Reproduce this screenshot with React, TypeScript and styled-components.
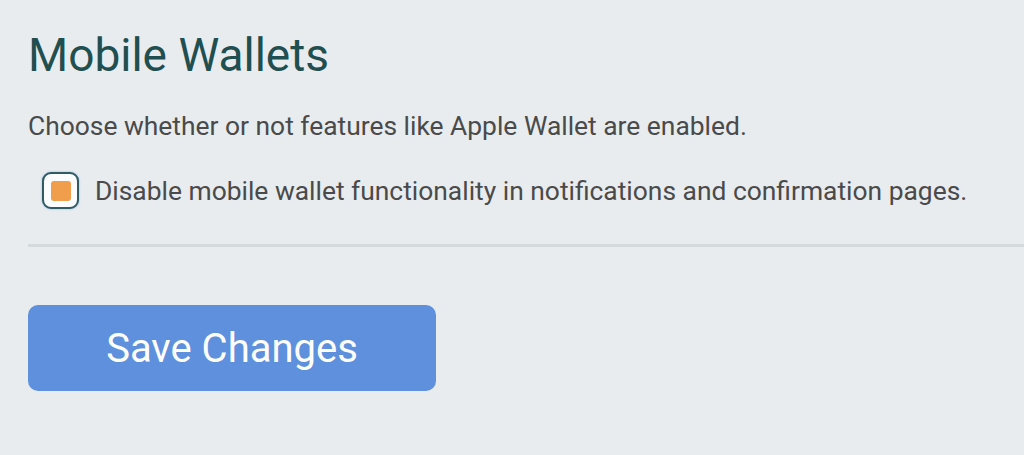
import styled, { createGlobalStyle } from "styled-components";

const GlobalStyle = createGlobalStyle`
  html, body {
    margin: 0;
    padding: 0;
    background: #e8ecef;
    font-family: Roboto, "Liberation Sans", sans-serif;
  }
`;

function App() {
  return (
    <>
      <GlobalStyle />
      <Page>
        <Title>Mobile Wallets</Title>
        <Description>
          Choose whether or not features like Apple Wallet are enabled.
        </Description>
        <Option>
          <Checkbox>
            <Mark />
          </Checkbox>
          <OptionLabel>
            Disable mobile wallet functionality in notifications and
            confirmation pages.
          </OptionLabel>
        </Option>
        <Divider />
        <SaveButton>Save Changes</SaveButton>
      </Page>
    </>
  );
}

export default App;

const Page = styled.div`
  height: 455px;
  box-sizing: border-box;
  padding: 27px 0 0 28px;
  display: flex;
  flex-direction: column;
  align-items: flex-start;
`;

const Title = styled.h1`
  margin: 0;
  font-size: 46px;
  font-weight: 400;
  line-height: 56px;
  color: #1f4f50;
`;

const Description = styled.p`
  margin: 27px 0 0;
  font-size: 26.4px;
  line-height: 32px;
  color: #4a4a4a;
`;

const Option = styled.label`
  margin-top: 30px;
  margin-left: 14px;
  display: flex;
  align-items: center;
  gap: 16px;
`;

const Checkbox = styled.span`
  width: 37px;
  height: 37px;
  flex-shrink: 0;
  box-sizing: border-box;
  border: 2px solid #2e5c60;
  border-radius: 9px;
  background: #fbfcfd;
  box-shadow: 0 0 2px rgba(70, 120, 230, 0.6);
  display: flex;
  align-items: center;
  justify-content: center;
`;

const Mark = styled.span`
  width: 20px;
  height: 20px;
  border-radius: 3px;
  background: #f19e4c;
`;

const OptionLabel = styled.span`
  font-size: 26.4px;
  line-height: 32px;
  white-space: nowrap;
  color: #4a4a4a;
`;

const Divider = styled.hr`
  align-self: stretch;
  margin: 35px 0 0;
  border: none;
  height: 3px;
  background: #d4dbdd;
`;

const SaveButton = styled.button`
  margin-top: 58px;
  width: 408px;
  height: 86px;
  border: none;
  border-radius: 10px;
  background: #5e90dd;
  color: #ffffff;
  font-family: Roboto, "Liberation Sans", sans-serif;
  font-size: 40px;
  font-weight: 400;
  cursor: pointer;
`;
